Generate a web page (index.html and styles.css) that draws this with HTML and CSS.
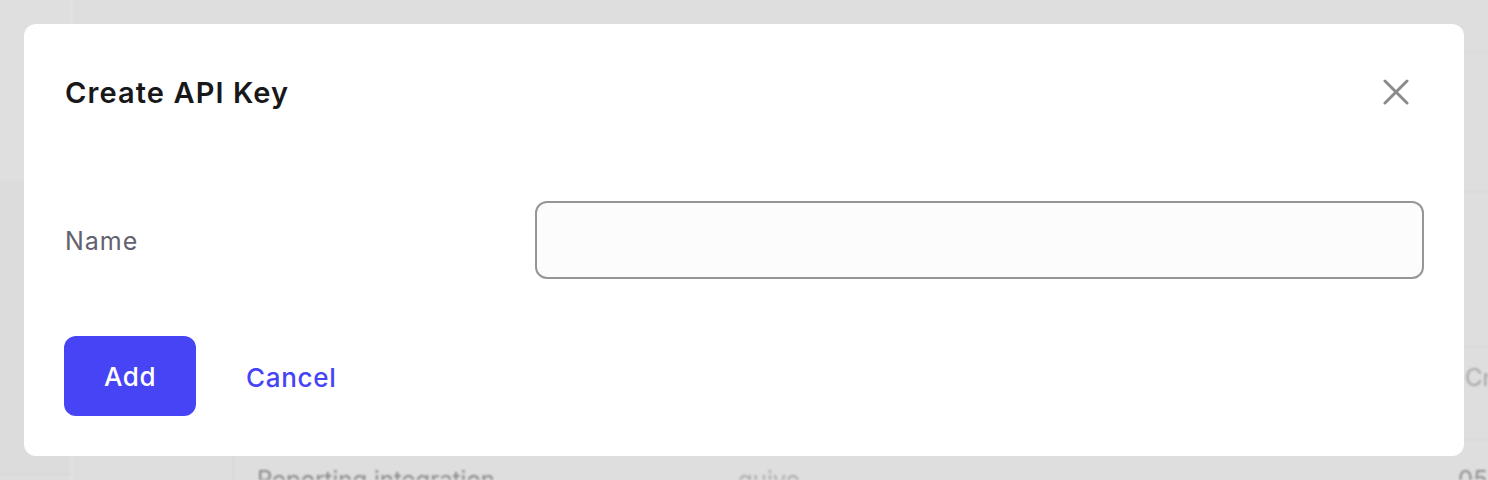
FILE: index.html
```html
<!DOCTYPE html>
<html lang="en">
<head>
<meta charset="utf-8">
<title>Create API Key</title>
<link rel="stylesheet" href="styles.css">
</head>
<body>
<div class="app" aria-hidden="true">
  <aside class="side">
    <div class="side-top"></div>
    <div class="side-rest"></div>
  </aside>
  <main class="main">
    <div class="row r1"></div>
    <div class="row r2"></div>
    <div class="row r3"></div>
    <div class="row r4">
      <span class="cell"></span><span class="cell c2"></span><span class="cell"></span><span class="cell c4 cr">Cr</span>
    </div>
    <div class="row r5">
      <span class="cell"></span><span class="cell c2 strong">Reporting integration</span><span class="cell light">quivo</span><span class="cell c4">05</span>
    </div>
  </main>
</div>

<div class="overlay">
  <div class="modal" role="dialog" aria-labelledby="dlg-title">
    <div class="modal-head">
      <h2 id="dlg-title" class="modal-title">Create API Key</h2>
      <button class="close" type="button" aria-label="Close">
        <svg width="26" height="26" viewBox="0 0 26 26" fill="none" stroke="currentColor" stroke-width="3" stroke-linecap="round">
          <line x1="2" y1="2" x2="24" y2="24"/>
          <line x1="24" y1="2" x2="2" y2="24"/>
        </svg>
      </button>
    </div>
    <div class="field">
      <label class="field-label" for="key-name">Name</label>
      <input id="key-name" class="field-input" type="text">
    </div>
    <div class="actions">
      <button class="btn-primary" type="button">Add</button>
      <button class="btn-link" type="button">Cancel</button>
    </div>
  </div>
</div>
</body>
</html>
```

FILE: styles.css
```css
* { box-sizing: border-box; }

html, body {
  margin: 0;
  padding: 0;
  width: 1488px;
  height: 480px;
  overflow: hidden;
}

body {
  background: #dedede;
  font-family: Inter, "Noto Sans", "Liberation Sans", sans-serif;
  position: relative;
}

/* ---------- backdrop (blurred page behind the dialog) ---------- */
.app {
  display: flex;
  height: 480px;
  overflow: hidden;
  filter: blur(1.2px);
  background: #dedede;
}

.side {
  width: 72px;
  flex: none;
  display: flex;
  flex-direction: column;
  border-right: 1px solid #e6e6e6;
}
.side-top { height: 180px; flex: none; background: #dfdfdf; }
.side-rest { flex: 1; background: #dcdcdc; border-bottom: 1px solid #d3d3d3; margin-bottom: 5px; }

.main {
  flex: 1;
  display: flex;
  flex-direction: column;
}

.row {
  flex: none;
  display: grid;
  grid-template-columns: 161px 482px 720px 1fr;
  border-bottom: 1px solid #d4d4d4;
}
.r1 { height: 53px; }
.r2 { height: 139px; }
.r3 { height: 155px; }
.r4 { height: 93px; }
.r5 { height: 60px; border-bottom: none; }

.cell {
  padding-left: 23px;
  font-size: 24px;
  line-height: 30px;
  color: #8e8e8e;
  white-space: nowrap;
  overflow: hidden;
}
.c2 { border-left: 1px solid #d2d2d2; }
.r5 .cell { padding-top: 25px; }
.strong { color: #8a8a8a; }
.light { color: #adadad; }
.c4 { padding-left: 23px; }
.cr { padding-left: 30px; padding-top: 16px; color: #a6a6a6; }

/* ---------- dialog ---------- */
.overlay {
  position: absolute;
  inset: 0;
  padding: 24px;
}

.modal {
  width: 1440px;
  height: 432px;
  background: #ffffff;
  border-radius: 12px;
  padding: 40px;
  display: flex;
  flex-direction: column;
}

.modal-head {
  display: flex;
  align-items: center;
  justify-content: space-between;
  height: 56px;
}

.modal-title {
  margin: 0;
  font-size: 29px;
  font-weight: 600;
  color: #18181b;
  letter-spacing: 1.1px;
  padding-left: 1px;
}

.close {
  border: 0;
  background: none;
  padding: 0;
  margin-right: 15px;
  width: 26px;
  height: 26px;
  color: #8b8b8b;
  display: flex;
  cursor: pointer;
}

.field {
  display: grid;
  grid-template-columns: 471px 1fr;
  align-items: center;
  margin-top: 81px;
}

.field-label {
  font-size: 25px;
  letter-spacing: 1px;
  color: #62616f;
  padding-left: 1px;
  padding-top: 2px;
}

.field-input {
  height: 78px;
  border: 2px solid #969696;
  border-radius: 12px;
  background: #fcfcfc;
  font: inherit;
  font-size: 24px;
  padding: 0 20px;
  outline: none;
}

.actions {
  display: flex;
  align-items: center;
  gap: 50px;
  margin-top: 57px;
}

.btn-primary {
  width: 132px;
  height: 80px;
  border: 0;
  border-radius: 12px;
  background: #4744f6;
  color: #ffffff;
  font-family: inherit;
  font-size: 26px;
  font-weight: 500;
  letter-spacing: 0.6px;
  padding-top: 2px;
  cursor: pointer;
}

.btn-link {
  border: 0;
  background: none;
  padding: 2px 0 0;
  color: #4744f6;
  font-family: inherit;
  font-size: 26px;
  font-weight: 500;
  letter-spacing: 0.7px;
  cursor: pointer;
}
```
